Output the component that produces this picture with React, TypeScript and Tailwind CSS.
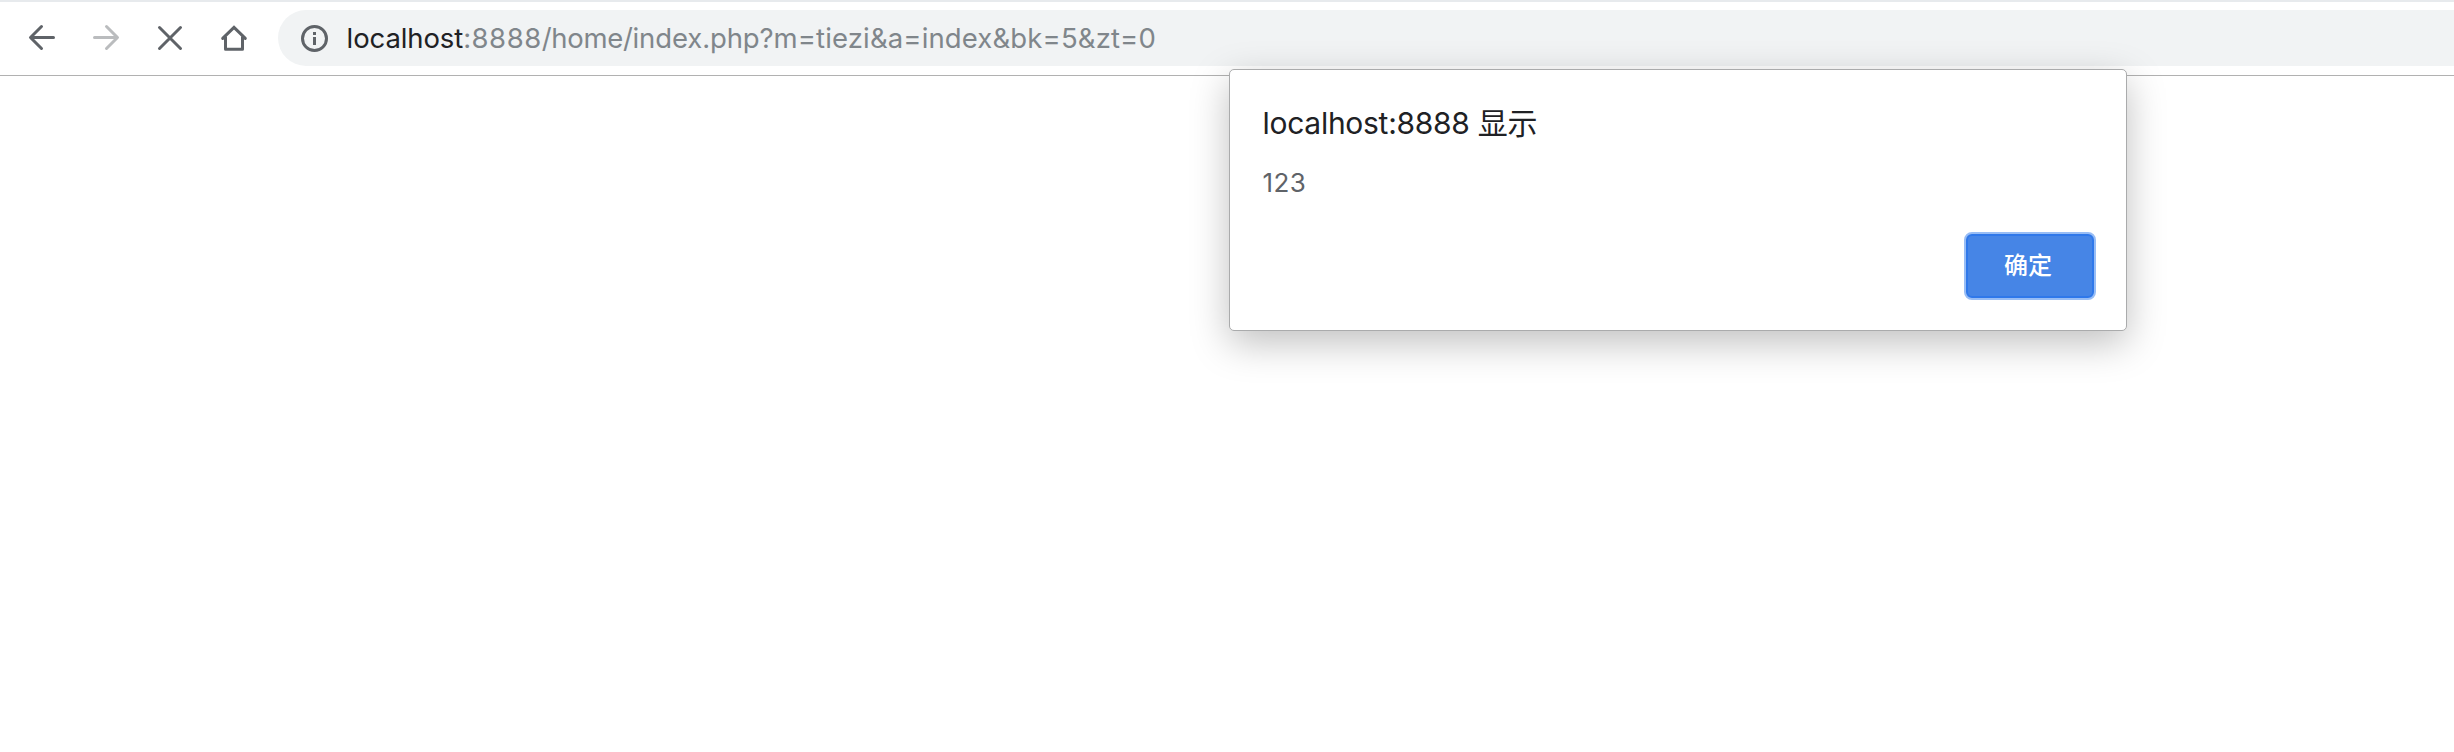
import type { ReactNode } from 'react';

function Icon({ children, className = 'text-[#5f6368]' }: { children: ReactNode; className?: string }) {
  return (
    <svg
      viewBox="0 0 32 32"
      className={`size-8 shrink-0 ${className}`}
      fill="none"
      stroke="currentColor"
      strokeWidth="3"
    >
      {children}
    </svg>
  );
}

function Toolbar() {
  return (
    <header className="flex h-[76px] items-start border-t-2 border-b border-t-[#e7eaed] border-b-[#b1b1b1] bg-white pt-2 pl-[26px]">
      <nav className="flex h-14 items-center gap-8">
        <Icon>
          <path d="M27.5 15.5H5M15.5 4.5l-11 11 11 11" strokeLinecap="round" strokeLinejoin="round" />
        </Icon>
        <Icon className="text-[#babcbe]">
          <path d="M4.5 15.5H27M16.5 4.5l11 11-11 11" strokeLinecap="round" strokeLinejoin="round" />
        </Icon>
        <Icon>
          <path d="M5.5 5.5l21 21M26.5 5.5l-21 21" strokeLinecap="round" />
        </Icon>
        <Icon>
          <path d="M4.7 16.4 16 5.4l11.3 11" strokeLinecap="round" />
          <path d="M7.5 14.5v12.7h17V14.5" strokeLinejoin="round" />
        </Icon>
      </nav>
      <div className="ml-7 flex h-14 flex-1 items-center rounded-l-full bg-[#f1f3f4] pl-5">
        <Icon>
          <circle cx="16.5" cy="16.5" r="12" />
          <path d="M16.5 10v3M16.5 15v8" />
        </Icon>
        <div className="ml-[16.6px] text-[27.5px] leading-[56px] whitespace-nowrap text-[#80868b]">
          <span className="tracking-[-0.1px] text-[#202124]">localhost</span>
          <span className="tracking-[0.5px]">:8888</span>
          <span className="tracking-[-0.3px]">/home/</span>
          <span className="tracking-[-0.12px]">index.php?</span>
          <span className="tracking-[0.14px]">m=tiezi&amp;a=index&amp;bk=5&amp;zt=0</span>
        </div>
      </div>
    </header>
  );
}

function AlertDialog() {
  return (
    <section
      role="alertdialog"
      className="absolute top-[69px] left-[1229px] flex h-[262px] w-[898px] flex-col rounded-[5px] border border-[#aaabac] bg-white px-8 shadow-[0_12px_38px_rgba(0,0,0,0.25)]"
    >
      <h1 className="mt-8 ml-[0.5px] text-[30px] leading-[42px] tracking-[-0.28px] text-[#202124]">
        localhost:8888 显示
      </h1>
      <p className="mt-[21px] ml-[0.5px] text-[26px] leading-9 tracking-[0.4px] text-[#5f6368]">123</p>
      <button className="mt-[31px] mr-[-2px] h-[68px] w-[132px] self-end rounded-[8px] border-2 border-[#98bdf5] bg-[#4685e6] pr-2 pl-1 text-2xl font-medium text-white inset-ring-2 inset-ring-[#2f78ea]">
        确定
      </button>
    </section>
  );
}

export default function App() {
  return (
    <main className="relative h-[752px] w-full overflow-hidden bg-white font-[Inter,'Noto_Sans_CJK_SC',sans-serif]">
      <Toolbar />
      <AlertDialog />
    </main>
  );
}
